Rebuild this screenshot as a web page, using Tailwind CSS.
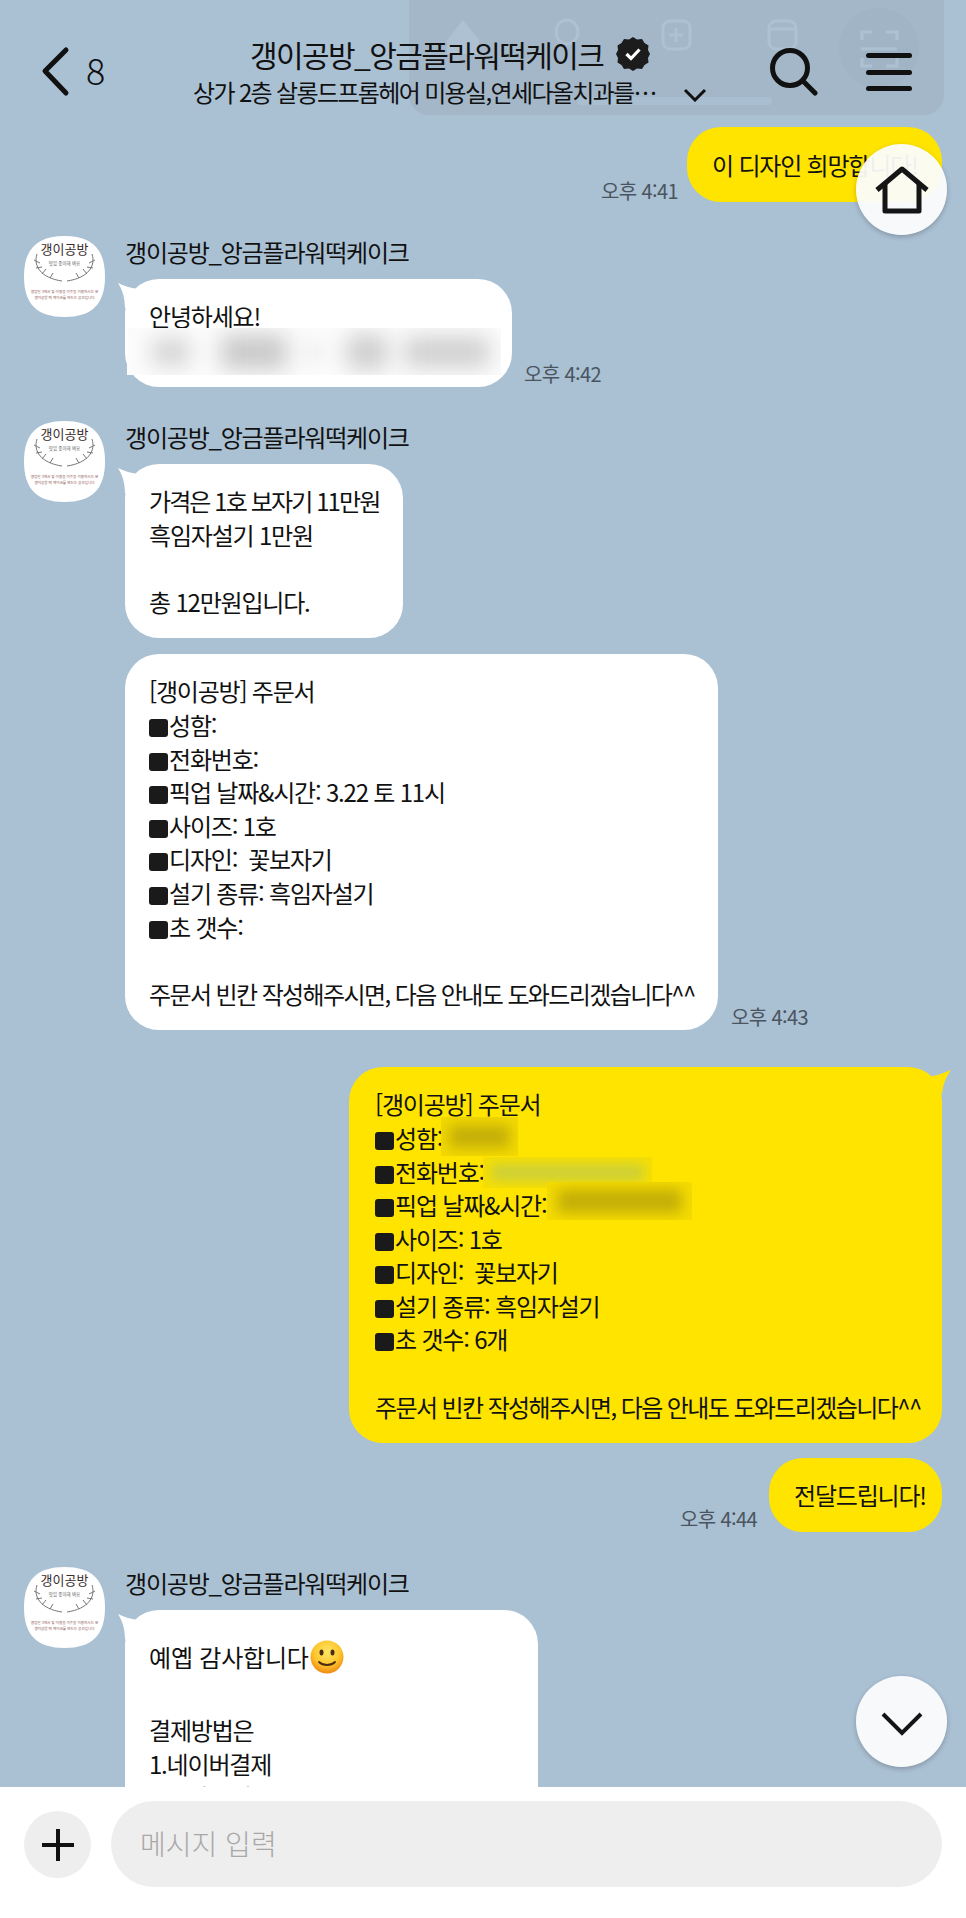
<!doctype html>
<html lang="ko">
<head>
<meta charset="utf-8">
<title>갱이공방 채팅</title>
<script src="https://cdn.jsdelivr.net/npm/@tailwindcss/browser@4"></script>
</head>
<body class="m-0">
<div class="relative w-[966px] h-[1918px] flex flex-col overflow-hidden bg-[#aac0d3] text-[#111] font-['Noto_Sans_CJK_KR','Noto_Sans',sans-serif] text-[24px] leading-[33.6px] tracking-[-1.2px]">

  <!-- 뒤에 비치는 다른 앱 하단바 -->
  <svg class="absolute left-[409px] top-0" width="535" height="115" viewBox="0 0 535 115">
    <path d="M0 0h535v95a20 20 0 0 1-20 20H20A20 20 0 0 1 0 95z" fill="#a3b7c8"/>
    <circle cx="470" cy="48" r="40" fill="#a1b4c6"/>
    <path d="M38 40l16-20 16 20v14H38z" fill="#adc1d2"/>
    <g fill="none" stroke="#adc1d2" stroke-width="3">
      <ellipse cx="158" cy="32" rx="11" ry="12"/>
      <rect x="254" y="21" width="27" height="28" rx="7"/>
      <path d="M267 28v14M260 35h14"/>
      <rect x="360" y="21" width="27" height="28" rx="7"/>
      <path d="M360 29h27"/>
      <path d="M453 40v-8h10M477 32h11v8M453 58v8h10M477 66h11v-8M452 49h36"/>
    </g>
    <rect x="168" y="97" width="195" height="8" rx="4" fill="#a9bed0"/>
  </svg>

  <!-- 헤더 -->
  <header class="relative h-[127px] shrink-0 flex">
    <div class="w-[193px] flex items-start pl-[41px] pt-[46px] gap-[16px]">
      <svg width="29" height="51" viewBox="0 0 29 51" fill="none" stroke="#111" stroke-width="5" stroke-linecap="round" stroke-linejoin="round"><path d="M25 4 4 25l21 22"/></svg>
      <span class="text-[36px] leading-[46px] tracking-normal font-light">8</span>
    </div>
    <div class="w-[577px] pt-[34px]">
      <div class="flex items-center pl-[57px] h-[40px]">
        <span class="text-[30px] leading-[40px] tracking-[-1.6px] whitespace-nowrap">갱이공방_앙금플라워떡케이크</span>
        <svg class="ml-[13px] mt-[-1px]" width="34" height="34" viewBox="0 0 34 34"><path fill="#1c1c1c" d="M17 0l4 2.500 5-.5 2.500 4 4 2.500-.5 4.500 2 4-2 4 .5 4.500-4 2.500-2.500 4-5-.5-4 2.500-4-2.500-5 .5-2.500-4-4-2.500.5-4.500-2-4 2-4-.5-4.500 4-2.500 2.500-4 5 .5z"/><path d="M10.500 17l4.500 4.500 8.500-9" fill="none" stroke="#fff" stroke-width="3.200"/></svg>
      </div>
      <div class="flex items-center h-[36px]">
        <span class="whitespace-nowrap tracking-[-1.65px] w-[490px]">상가 2층 살롱드프롬헤어 미용실,연세다올치과를…</span>
        <svg width="24" height="14" viewBox="0 0 24 14" fill="none" stroke="#111" stroke-width="3" class="mt-[5px]"><path d="M2 2l10 10L22 2"/></svg>
      </div>
    </div>
    <svg class="mt-[48px]" width="48" height="48" viewBox="0 0 48 48" fill="none" stroke="#111" stroke-width="5" stroke-linecap="round"><circle cx="20" cy="20" r="17.500"/><path d="M33 33l12 12"/></svg>
    <div class="ml-[48px] mt-[53px] w-[46px] flex flex-col gap-[11.500px]">
      <span class="h-[5px] bg-[#111] rounded-full"></span>
      <span class="h-[5px] bg-[#111] rounded-full"></span>
      <span class="h-[5px] bg-[#111] rounded-full"></span>
    </div>
  </header>

  <!-- 메시지 목록 -->
  <main class="flex-1 min-h-0 overflow-hidden relative">

    <div class="flex justify-end items-end gap-[9px] pr-[24px]">
      <time class="text-[#4a5560] text-[20px] leading-[20px] tracking-[-.6px] mb-[1px]">오후 4:41</time>
      <div class="w-[255px] h-[75px] rounded-[34px] bg-[#ffe400] pl-[25px] flex items-center whitespace-nowrap">이 디자인 희망합니다!</div>
    </div>

    <!-- 받은 메시지 1 -->
    <div class="flex gap-[20px] pl-[24px] mt-[34px]">
      <svg class="shrink-0" width="81" height="81" viewBox="0 0 81 81">
        <path d="M40.500 0C68 0 81 13 81 40.500S68 81 40.500 81 0 68 0 40.500 13 0 40.500 0z" fill="#fff"/>
        <text x="40.500" y="18" text-anchor="middle" font-size="13" letter-spacing="0" fill="#3a2c2c">갱이공방</text>
        <text x="40.500" y="29" text-anchor="middle" font-size="4.500" letter-spacing="0" fill="#666">맛있 좋아해 봐요</text>
        <g fill="none" stroke="#777" stroke-width="1"><path d="M13 18c-4 12 4 24 25 27M68 18c4 12-4 24-25 27"/><path d="M10 24l6 3M12 32l6-1M18 38l4-5M26 42l3-5M71 24l-6 3M69 32l-6-1M63 38l-4-5M55 42l-3-5"/></g>
        <text x="40.500" y="57" text-anchor="middle" font-size="3.600" letter-spacing="0" fill="#8a5050">영업일 3에서 및 이용을 이웃을 이용하시는 분</text>
        <text x="40.500" y="63" text-anchor="middle" font-size="3.600" letter-spacing="0" fill="#8a5050">갱이공방 떡 케이크를 만드는 공간입니다</text>
      </svg>
      <div>
        <p class="leading-[32px] whitespace-nowrap">갱이공방_앙금플라워떡케이크</p>
        <div class="flex items-end gap-[12px] mt-[11px]">
          <div class="relative w-[387px] rounded-[34px] bg-white pl-[24px] py-[20px]">
            <svg class="absolute left-[-7px] top-[4px]" width="20" height="28" viewBox="0 0 20 28"><path d="M0 0c6 3 12 5 20 6L7 26C7 16 5 8 0 0z" fill="#fff"/></svg>
            <div class="h-[68px] relative z-10">안녕하세요!</div>
            <div class="absolute z-20 left-[2px] top-[49px] w-[374px] h-[47px] overflow-hidden bg-[#fcfcfc]">
              <div class="h-full blur-[11px] flex items-center">
                <span class="ml-[26px] h-[26px] w-[36px] bg-[#d0d0d0]"></span><span class="ml-[32px] h-[34px] w-[66px] bg-[#c8c8c8]"></span><span class="ml-[20px] h-[14px] w-[14px] bg-[#e0e0e0]"></span><span class="ml-[26px] h-[34px] w-[40px] bg-[#cccccc]"></span><span class="ml-[18px] h-[30px] w-[84px] bg-[#cecece]"></span>
              </div>
            </div>
          </div>
          <time class="text-[#4a5560] text-[20px] leading-[20px] tracking-[-.6px] mb-[3px]">오후 4:42</time>
        </div>
      </div>
    </div>

    <!-- 받은 메시지 2 -->
    <div class="flex gap-[20px] pl-[24px] mt-[34px]">
      <svg class="shrink-0" width="81" height="81" viewBox="0 0 81 81">
        <path d="M40.500 0C68 0 81 13 81 40.500S68 81 40.500 81 0 68 0 40.500 13 0 40.500 0z" fill="#fff"/>
        <text x="40.500" y="18" text-anchor="middle" font-size="13" letter-spacing="0" fill="#3a2c2c">갱이공방</text>
        <text x="40.500" y="29" text-anchor="middle" font-size="4.500" letter-spacing="0" fill="#666">맛있 좋아해 봐요</text>
        <g fill="none" stroke="#777" stroke-width="1"><path d="M13 18c-4 12 4 24 25 27M68 18c4 12-4 24-25 27"/><path d="M10 24l6 3M12 32l6-1M18 38l4-5M26 42l3-5M71 24l-6 3M69 32l-6-1M63 38l-4-5M55 42l-3-5"/></g>
        <text x="40.500" y="57" text-anchor="middle" font-size="3.600" letter-spacing="0" fill="#8a5050">영업일 3에서 및 이용을 이웃을 이용하시는 분</text>
        <text x="40.500" y="63" text-anchor="middle" font-size="3.600" letter-spacing="0" fill="#8a5050">갱이공방 떡 케이크를 만드는 공간입니다</text>
      </svg>
      <div>
        <p class="leading-[32px] whitespace-nowrap">갱이공방_앙금플라워떡케이크</p>
        <div class="relative mt-[11px] w-[278px] rounded-[34px] bg-white pl-[24px] py-[20px]">
          <svg class="absolute left-[-7px] top-[4px]" width="20" height="28" viewBox="0 0 20 28"><path d="M0 0c6 3 12 5 20 6L7 26C7 16 5 8 0 0z" fill="#fff"/></svg>
          <p class="relative whitespace-pre-line"><span class="tracking-[-1.9px]">가격은 1호 보자기 11만원</span>
흑임자설기 1만원

총 12만원입니다.</p>
        </div>
        <div class="flex items-end gap-[13px] mt-[16px]">
          <div class="w-[593px] rounded-[34px] bg-white pl-[24px] py-[20px]">
            <p class="whitespace-pre-wrap">[갱이공방] 주문서
<span class="inline-block w-[19px] h-[18px] mr-[1px] rounded-[3px] bg-[#1a1a1a] align-[-2px]"></span>성함:
<span class="inline-block w-[19px] h-[18px] mr-[1px] rounded-[3px] bg-[#1a1a1a] align-[-2px]"></span>전화번호:
<span class="inline-block w-[19px] h-[18px] mr-[1px] rounded-[3px] bg-[#1a1a1a] align-[-2px]"></span>픽업 날짜&amp;시간: 3.22 토 11시
<span class="inline-block w-[19px] h-[18px] mr-[1px] rounded-[3px] bg-[#1a1a1a] align-[-2px]"></span>사이즈: 1호
<span class="inline-block w-[19px] h-[18px] mr-[1px] rounded-[3px] bg-[#1a1a1a] align-[-2px]"></span>디자인:  꽃보자기
<span class="inline-block w-[19px] h-[18px] mr-[1px] rounded-[3px] bg-[#1a1a1a] align-[-2px]"></span>설기 종류: 흑임자설기
<span class="inline-block w-[19px] h-[18px] mr-[1px] rounded-[3px] bg-[#1a1a1a] align-[-2px]"></span>초 갯수:

<span class="tracking-[-1.6px]">주문서 빈칸 작성해주시면, 다음 안내도 도와드리겠습니다^^</span></p>
          </div>
          <time class="text-[#4a5560] text-[20px] leading-[20px] tracking-[-.6px] mb-[3px]">오후 4:43</time>
        </div>
      </div>
    </div>

    <!-- 보낸 주문서 -->
    <div class="flex justify-end pr-[24px] mt-[37px]">
      <div class="relative w-[593px] rounded-[34px] bg-[#ffe400] pl-[26px] py-[20px]">
        <svg class="absolute right-[-9px] top-[3px]" width="26" height="26" viewBox="0 0 26 26"><path d="M0 7c8 0 16-3 26-7-5 7-8 14-9 24z" fill="#ffe400"/></svg>
        <p class="relative whitespace-pre-wrap">[갱이공방] 주문서
<span class="inline-block w-[19px] h-[18px] mr-[1px] rounded-[3px] bg-[#1a1a1a] align-[-2px]"></span>성함:
<span class="inline-block w-[19px] h-[18px] mr-[1px] rounded-[3px] bg-[#1a1a1a] align-[-2px]"></span>전화번호:
<span class="inline-block w-[19px] h-[18px] mr-[1px] rounded-[3px] bg-[#1a1a1a] align-[-2px]"></span>픽업 날짜&amp;시간:
<span class="inline-block w-[19px] h-[18px] mr-[1px] rounded-[3px] bg-[#1a1a1a] align-[-2px]"></span>사이즈: 1호
<span class="inline-block w-[19px] h-[18px] mr-[1px] rounded-[3px] bg-[#1a1a1a] align-[-2px]"></span>디자인:  꽃보자기
<span class="inline-block w-[19px] h-[18px] mr-[1px] rounded-[3px] bg-[#1a1a1a] align-[-2px]"></span>설기 종류: 흑임자설기
<span class="inline-block w-[19px] h-[18px] mr-[1px] rounded-[3px] bg-[#1a1a1a] align-[-2px]"></span>초 갯수: 6개

<span class="tracking-[-1.6px]">주문서 빈칸 작성해주시면, 다음 안내도 도와드리겠습니다^^</span></p>
        <div class="absolute left-[92px] top-[50px] w-[77px] h-[39px] overflow-hidden bg-[#f3da00]"><div class="m-[8px] h-[23px] blur-[7px] bg-[#c4ae08]"></div></div>
        <div class="absolute left-[134px] top-[90px] w-[169px] h-[31px] overflow-hidden bg-[#f6df04]"><div class="mx-[8px] my-[7px] h-[17px] blur-[6px] bg-[#cccf38]"></div></div>
        <div class="absolute left-[198px] top-[115px] w-[145px] h-[38px] overflow-hidden bg-[#f5dc00]"><div class="mx-[10px] my-[7px] h-[24px] blur-[7px] bg-[#c4ae08]"></div></div>
      </div>
    </div>

    <div class="flex justify-end items-end gap-[12px] pr-[24px] mt-[15px]">
      <time class="text-[#4a5560] text-[20px] leading-[20px] tracking-[-.6px] mb-[3px]">오후 4:44</time>
      <div class="w-[173px] h-[74px] rounded-[34px] bg-[#ffe400] pl-[25px] flex items-center whitespace-nowrap">전달드립니다!</div>
    </div>

    <!-- 받은 메시지 3 -->
    <div class="flex gap-[20px] pl-[24px] mt-[35px]">
      <svg class="shrink-0" width="81" height="81" viewBox="0 0 81 81">
        <path d="M40.500 0C68 0 81 13 81 40.500S68 81 40.500 81 0 68 0 40.500 13 0 40.500 0z" fill="#fff"/>
        <text x="40.500" y="18" text-anchor="middle" font-size="13" letter-spacing="0" fill="#3a2c2c">갱이공방</text>
        <text x="40.500" y="29" text-anchor="middle" font-size="4.500" letter-spacing="0" fill="#666">맛있 좋아해 봐요</text>
        <g fill="none" stroke="#777" stroke-width="1"><path d="M13 18c-4 12 4 24 25 27M68 18c4 12-4 24-25 27"/><path d="M10 24l6 3M12 32l6-1M18 38l4-5M26 42l3-5M71 24l-6 3M69 32l-6-1M63 38l-4-5M55 42l-3-5"/></g>
        <text x="40.500" y="57" text-anchor="middle" font-size="3.600" letter-spacing="0" fill="#8a5050">영업일 3에서 및 이용을 이웃을 이용하시는 분</text>
        <text x="40.500" y="63" text-anchor="middle" font-size="3.600" letter-spacing="0" fill="#8a5050">갱이공방 떡 케이크를 만드는 공간입니다</text>
      </svg>
      <div>
        <p class="leading-[32px] whitespace-nowrap">갱이공방_앙금플라워떡케이크</p>
        <div class="relative mt-[11px] w-[413px] rounded-t-[34px] bg-white pl-[24px] pt-[20px] pb-[20px]">
          <svg class="absolute left-[-7px] top-[4px]" width="20" height="28" viewBox="0 0 20 28"><path d="M0 0c6 3 12 5 20 6L7 26C7 16 5 8 0 0z" fill="#fff"/></svg>
          <div class="relative flex items-center h-[54px] tracking-[-.2px]">
            예옙 감사합니다
            <svg class="ml-[1px]" width="34" height="34" viewBox="0 0 34 34">
              <defs><radialGradient id="face" cx="50%" cy="35%" r="65%"><stop offset="0" stop-color="#ffe566"/><stop offset=".6" stop-color="#fdc72e"/><stop offset="1" stop-color="#f08a12"/></radialGradient></defs>
              <circle cx="17" cy="17" r="16.500" fill="url(#face)"/>
              <ellipse cx="11.500" cy="12.500" rx="2" ry="3" fill="#4a2c10"/><ellipse cx="22.500" cy="12.500" rx="2" ry="3" fill="#4a2c10"/>
              <path d="M9 22c4 4 12 4 16 0" fill="none" stroke="#4a2c10" stroke-width="1.800" stroke-linecap="round"/>
            </svg>
          </div>
          <div class="h-[29px]"></div>
          <div>결제방법은</div>
          <div>1.네이버결제</div>
          <div>2.계좌이체</div>
        </div>
      </div>
    </div>
  </main>

  <!-- 입력창 -->
  <footer class="relative z-10 h-[131px] shrink-0 bg-white flex items-start gap-[20px] pl-[24px] pr-[24px] pt-[14px] tracking-normal">
    <div class="mt-[10px] w-[67px] h-[67px] rounded-full bg-[#eeeeee] flex items-center justify-center">
      <svg width="32" height="32" viewBox="0 0 32 32" stroke="#111" stroke-width="4"><path d="M16 0v32M0 16h32"/></svg>
    </div>
    <div class="flex-1 h-[86px] rounded-full bg-[#eeeeee] pl-[29px] flex items-center text-[28px] font-light text-[#a8a8a8]">메시지 입력</div>
  </footer>

  <!-- 플로팅 버튼 -->
  <button class="absolute left-[856px] top-[144px] w-[91px] h-[91px] rounded-full bg-[#fbfcfc]/95 shadow-[0_2px_5px_rgba(0,0,0,.22)] flex items-center justify-center">
    <svg width="54" height="48" viewBox="0 0 54 48" fill="none" stroke="#151515" stroke-width="5" stroke-linejoin="round"><path d="M2 24 27 3l25 21"/><path d="M10 18v27h34V18"/></svg>
  </button>
  <button class="absolute left-[856px] top-[1676px] w-[91px] h-[91px] rounded-full bg-[#fbfcfc]/95 shadow-[0_2px_5px_rgba(0,0,0,.22)] flex items-center justify-center">
    <svg class="mt-[4px]" width="42" height="24" viewBox="0 0 42 24" fill="none" stroke="#151515" stroke-width="4"><path d="M2 2l19 19L40 2"/></svg>
  </button>
</div>
</body>
</html>
